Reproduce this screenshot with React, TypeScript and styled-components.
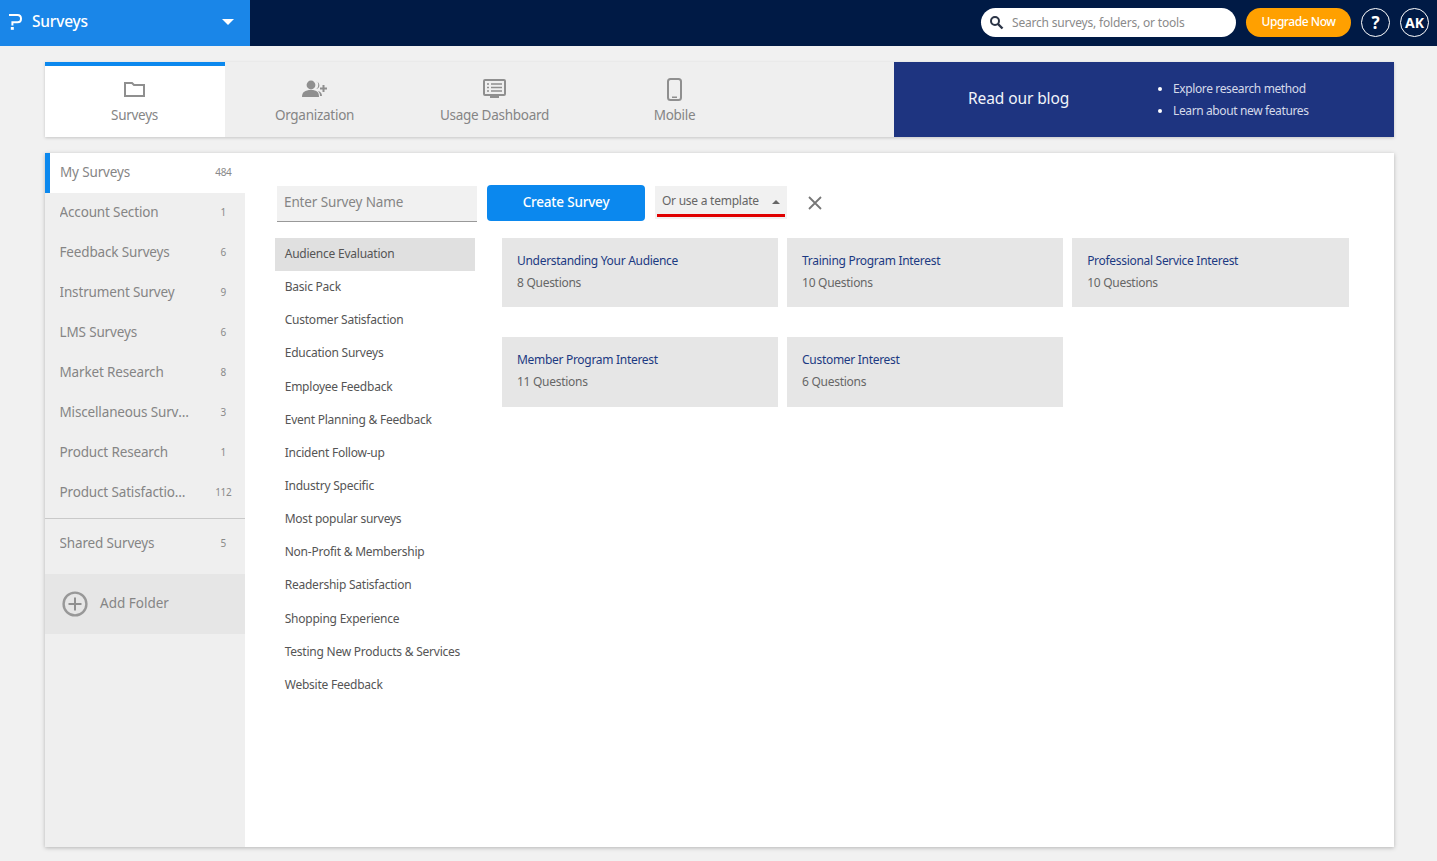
import React from "react";
import styled, { createGlobalStyle } from "styled-components";

const Global = createGlobalStyle`
  html, body { margin: 0; padding: 0; background: #f1f1f1; }
  body { font-family: "Noto Sans", "Open Sans", sans-serif; width: 1437px; height: 861px; overflow: hidden; }
  * { box-sizing: border-box; }
`;

const TopBar = styled.header`
  height: 46px; background: #001a45; display: flex; align-items: center;
  padding-right: 8px;
`;
const Brand = styled.div`
  width: 250px; height: 46px; background: #1a86e8; display: flex; align-items: center;
  padding: 0 16px 3px 9px; color: #fff;
`;
const BrandName = styled.span`
  font-size: 15.5px; font-weight: 500; margin-left: 10px; flex: 1; letter-spacing: -0.2px; margin-bottom: 1px;
`;
const Caret = styled.span`
  width: 0; height: 0; border-left: 6px solid transparent; border-right: 6px solid transparent;
  border-top: 6px solid #fff;
`;
const TopRight = styled.div`
  margin-left: auto; display: flex; align-items: center;
`;
const SearchBox = styled.div`
  width: 255px; height: 29px; background: #fff; border-radius: 15px; display: flex; align-items: center;
  padding-left: 8px; color: #888; font-size: 12px; margin-right: 10px; margin-bottom: 1px;
`;
const SearchText = styled.span`margin-left: 8px; letter-spacing: -0.19px; color: #8a8a8a;`;
const Upgrade = styled.div`
  width: 105px; height: 29px; border-radius: 15px; background: #ffa000; color: #fff; font-size: 12px; font-weight: 500;
  display: flex; align-items: center; justify-content: center; margin-right: 10px; margin-bottom: 1px; padding-bottom: 2px; letter-spacing: -0.45px;
`;
const Round = styled.div<{ $size: number; $ml: number }>`
  width: 29px; height: 29px; border-radius: 50%; border: 1px solid #fff; color: #fff; font-weight: 700;
  display: flex; align-items: center; justify-content: center; font-size: ${p => p.$size}px; margin-left: ${p => p.$ml}px; margin-bottom: 1px;
`;

const TabBar = styled.nav`
  margin: 16px 43px 0 45px; height: 75px; background: #efefef; display: flex;
  box-shadow: 0 1px 3px rgba(0,0,0,.18);
`;
const Tab = styled.div<{ $active?: boolean }>`
  width: 180px; display: flex; flex-direction: column; align-items: center;
  background: ${p => (p.$active ? "#fff" : "transparent")};
  border-top: 4px solid ${p => (p.$active ? "#0b88ee" : "transparent")};
  padding: 10px 1px 0 0; color: #8a8a8a;
`;
const TabIcon = styled.div`
  height: 26px; display: flex; align-items: center; justify-content: center;
`;
const TabLabel = styled.div`
  font-size: 13.5px; margin-top: 4px; line-height: 18px; color: #858585; letter-spacing: -0.27px;
`;
const Blog = styled.div`
  margin-left: auto; width: 500px; background: #1e3480; color: #fff; display: flex; align-items: center;
  padding-left: 74px;
`;
const BlogTitle = styled.div`
  font-size: 15.5px; width: 190px; margin-top: -4px; color: #f2f4fa; letter-spacing: -0.1px;
`;
const BlogList = styled.ul`
  margin: 0; padding: 0 0 0 15px; font-size: 12px; line-height: 22px; color: #d5daea; letter-spacing: -0.38px;
  li::marker { color: #fff; }
`;

const Card = styled.section`
  margin: 16px 43px 0 45px; height: 694px; background: #fff; display: flex;
  box-shadow: 0 1px 4px rgba(0,0,0,.25);
`;
const Side = styled.aside`
  width: 200px; background: #efefef; display: flex; flex-direction: column;
`;
const SideRow = styled.div<{ $active?: boolean }>`
  height: 40px; display: flex; align-items: center; flex: none; padding-bottom: 2px;
  padding-left: ${p => (p.$active ? "10px" : "14.5px")};
  border-left: ${p => (p.$active ? "5px solid #0b88ee" : "0")};
  background: ${p => (p.$active ? "#fff" : "transparent")};
  color: #858585; font-size: 13.5px; letter-spacing: -0.15px;
`;
const SideName = styled.span`
  width: 133px; white-space: nowrap; overflow: hidden; text-overflow: ellipsis;
`;
const SideCount = styled.span`
  width: 44px; margin-left: 11px; text-align: center; font-size: 10px; letter-spacing: -0.3px; color: #8a8a8a;
`;
const SideDivider = styled.div`
  height: 1px; background: #c9c9c9; margin-top: 5px; margin-bottom: 5px;
`;
const AddFolder = styled.div`
  height: 60px; background: #e6e6e6; margin-top: 10px; display: flex; align-items: center;
  padding-left: 17px; color: #858585; font-size: 13.5px; gap: 12px;
`;
const AddLabel = styled.span`margin-bottom: 2px;`;

const Content = styled.div`
  flex: 1; padding: 32px 45px 0 30px; display: flex; flex-direction: column;
`;
const FormRow = styled.div`
  display: flex; align-items: flex-start; height: 53px;
`;
const NameInput = styled.div`
  width: 200px; height: 36px; background: #f1f1f1; border-bottom: 1px solid #999; margin: 1px 0 0 2px;
  display: flex; align-items: center; padding: 0 7px 4px; color: #858585; font-size: 13.5px; letter-spacing: -0.13px;
`;
const CreateBtn = styled.div`
  width: 158px; height: 36px; margin-left: 10px; background: #0b88ee; border-radius: 4px; color: #fff;
  font-size: 13.5px; font-weight: 500; display: flex; align-items: center; justify-content: center; letter-spacing: -0.2px; padding-bottom: 2px;
`;
const TemplateSelect = styled.div`
  width: 132px; height: 33px; margin: 1px 0 0 10px; background: #f1f1f1; position: relative;
  display: flex; align-items: center; padding: 0 7px 5px 7px; color: #666; font-size: 12px; letter-spacing: -0.25px;
  justify-content: space-between;
  &::after { content: ""; position: absolute; left: 2px; right: 2px; bottom: 2px; height: 3px; background: #e00000; }
`;
const UpCaret = styled.span`
  width: 0; height: 0; border-left: 4.5px solid transparent; border-right: 4.5px solid transparent;
  border-bottom: 4px solid #666; margin-top: 3px;
`;
const CloseBtn = styled.div`
  margin-left: 20px; height: 36px; display: flex; align-items: center;
`;
const Body = styled.div`display: flex; align-items: flex-start;`;
const Categories = styled.div`width: 200px; display: flex; flex-direction: column;`;
const Category = styled.div<{ $active?: boolean }>`
  height: 33.15px; display: flex; align-items: center; padding: 0 0 2px 9.7px; font-size: 12px; color: #555; letter-spacing: -0.23px;
  background: ${p => (p.$active ? "#e0e0e0" : "transparent")};
`;
const Templates = styled.div`
  margin-left: 27px; display: grid; grid-template-columns: repeat(3, 276.4px); column-gap: 8.7px; row-gap: 30px;
`;
const TemplateCard = styled.div`
  height: 69.4px; background: #e6e6e6; padding: 13px 15px;
`;
const TemplateTitle = styled.div`
  font-size: 12px; line-height: 20px; color: #1c3a82; letter-spacing: -0.3px;
`;
const TemplateMeta = styled.div`
  font-size: 12px; line-height: 20px; margin-top: 2px; color: #666; letter-spacing: -0.28px;
`;

const sideRows: [string, string][] = [
  ["Account Section", "1"], ["Feedback Surveys", "6"], ["Instrument Survey", "9"], ["LMS Surveys", "6"],
  ["Market Research", "8"], ["Miscellaneous Surveys", "3"], ["Product Research", "1"], ["Product Satisfaction Surveys", "112"],
];
const cats = ["Audience Evaluation","Basic Pack","Customer Satisfaction","Education Surveys","Employee Feedback","Event Planning & Feedback","Incident Follow-up","Industry Specific","Most popular surveys","Non-Profit & Membership","Readership Satisfaction","Shopping Experience","Testing New Products & Services","Website Feedback"];
const cards: [string, string][] = [
  ["Understanding Your Audience","8 Questions"],["Training Program Interest","10 Questions"],["Professional Service Interest","10 Questions"],
  ["Member Program Interest","11 Questions"],["Customer Interest","6 Questions"],
];

const c = "#8f8f8f";
export default function App() {
  return (
    <>
      <Global />
      <TopBar>
        <Brand>
          <svg width="13" height="16" viewBox="0 0 13 16" fill="none">
            <path d="M0 1H8.500C10.700 1 12 2.500 12 4.700C12 6.900 10.700 8.200 8.500 8.200H3.400V11.500" stroke="#fff" strokeWidth="2" />
            <rect x="1.800" y="13" width="3" height="2.800" fill="#fff" />
          </svg>
          <BrandName>Surveys</BrandName>
          <Caret />
        </Brand>
        <TopRight>
          <SearchBox>
            <svg width="15" height="15" viewBox="0 0 15 15" fill="none">
              <circle cx="6" cy="6" r="4" stroke="#2b3446" strokeWidth="2" />
              <path d="M9 9L13.500 13.500" stroke="#2b3446" strokeWidth="2.400" />
            </svg>
            <SearchText>Search surveys, folders, or tools</SearchText>
          </SearchBox>
          <Upgrade>Upgrade Now</Upgrade>
          <Round $size={17} $ml={0}>?</Round>
          <Round $size={14} $ml={10}>AK</Round>
        </TopRight>
      </TopBar>

      <TabBar>
        <Tab $active>
          <TabIcon>
            <svg width="21" height="16" viewBox="0 0 21 16" fill="none">
              <path d="M1 15V2H8L10 4H20V15H1Z" stroke={c} strokeWidth="2" />
            </svg>
          </TabIcon>
          <TabLabel>Surveys</TabLabel>
        </Tab>
        <Tab>
          <TabIcon>
            <svg width="25" height="18" viewBox="0 0 25 18" fill={c}>
              <circle cx="9" cy="5" r="4.400" />
              <path d="M0 17C0 12 3 10 9 10C15 10 17 12 17 17H0Z" />
              <path d="M14 1C17 1.500 17 8 14 9C18 9 19 3 14 1Z" />
              <path d="M16 11C18 11.500 20 13 20 16H18C18 14 17.500 12.500 16 11Z" />
              <path d="M20.500 5H22.500V7.500H25V9.500H22.500V12H20.500V9.500H18V7.500H20.500Z" />
            </svg>
          </TabIcon>
          <TabLabel>Organization</TabLabel>
        </Tab>
        <Tab>
          <TabIcon>
            <svg width="23" height="20" viewBox="0 0 23 20" fill="none">
              <rect x="1" y="1" width="21" height="15" rx="1" stroke={c} strokeWidth="2" />
              <path d="M4 5H6M8 5H19M4 8.500H6M8 8.500H19M4 12H6M8 12H19" stroke={c} strokeWidth="1.500" />
              <rect x="7" y="16" width="9" height="3" fill={c} />
            </svg>
          </TabIcon>
          <TabLabel>Usage Dashboard</TabLabel>
        </Tab>
        <Tab>
          <TabIcon>
            <svg width="15" height="23" viewBox="0 0 15 23" fill="none">
              <rect x="1" y="1" width="13" height="21" rx="2.500" stroke={c} strokeWidth="2" />
              <rect x="5" y="18.500" width="5" height="1.500" fill={c} />
            </svg>
          </TabIcon>
          <TabLabel>Mobile</TabLabel>
        </Tab>
        <Blog>
          <BlogTitle>Read our blog</BlogTitle>
          <BlogList>
            <li>Explore research method</li>
            <li>Learn about new features</li>
          </BlogList>
        </Blog>
      </TabBar>

      <Card>
        <Side>
          <SideRow $active>
            <SideName>My Surveys</SideName>
            <SideCount>484</SideCount>
          </SideRow>
          {sideRows.map(([n, v]) => (
            <SideRow key={n}>
              <SideName>{n}</SideName>
              <SideCount>{v}</SideCount>
            </SideRow>
          ))}
          <SideDivider />
          <SideRow>
            <SideName>Shared Surveys</SideName>
            <SideCount>5</SideCount>
          </SideRow>
          <AddFolder>
            <svg width="26" height="26" viewBox="0 0 26 26" fill="none">
              <circle cx="13" cy="13" r="11.400" stroke="#989898" strokeWidth="2.400" />
              <path d="M13 6.500V19.500M6.500 13H19.500" stroke="#909090" strokeWidth="2" />
            </svg>
            <AddLabel>Add Folder</AddLabel>
          </AddFolder>
        </Side>
        <Content>
          <FormRow>
            <NameInput>Enter Survey Name</NameInput>
            <CreateBtn>Create Survey</CreateBtn>
            <TemplateSelect>
              <span>Or use a template</span>
              <UpCaret />
            </TemplateSelect>
            <CloseBtn>
              <svg width="16" height="16" viewBox="0 0 16 16" fill="none">
                <path d="M2 2L14 14M14 2L2 14" stroke="#777" strokeWidth="1.800" />
              </svg>
            </CloseBtn>
          </FormRow>
          <Body>
            <Categories>
              {cats.map((n, i) => (
                <Category key={n} $active={i === 0}>{n}</Category>
              ))}
            </Categories>
            <Templates>
              {cards.map(([t, m]) => (
                <TemplateCard key={t}>
                  <TemplateTitle>{t}</TemplateTitle>
                  <TemplateMeta>{m}</TemplateMeta>
                </TemplateCard>
              ))}
            </Templates>
          </Body>
        </Content>
      </Card>
    </>
  );
}
